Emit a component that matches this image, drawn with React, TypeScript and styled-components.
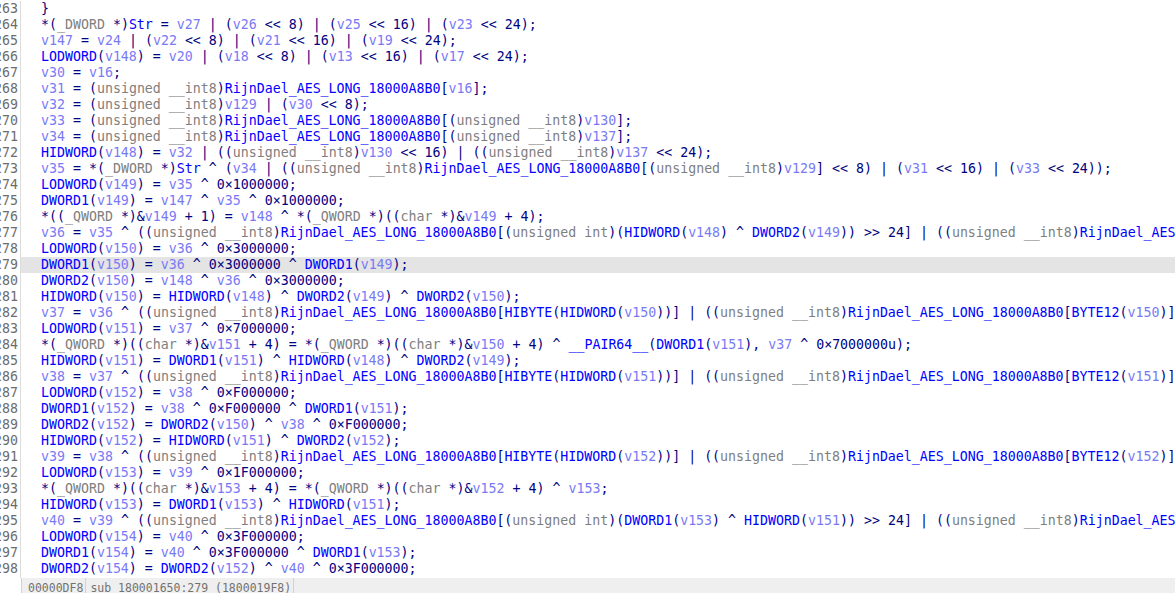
import React from 'react';
import styled, { createGlobalStyle } from 'styled-components';

const MONO = `"DejaVu Sans Mono", "Liberation Mono", monospace`;

const Global = createGlobalStyle`
  html, body { margin: 0; padding: 0; background: #ffffff; overflow: hidden; }
  #root { width: 1175px; height: 593px; overflow: hidden; }
`;

const Window = styled.div`
  display: flex;
  flex-direction: column;
  width: 1175px;
  height: 593px;
  overflow: hidden;
  background: #ffffff;
`;

const Editor = styled.div`
  display: flex;
  flex-direction: column;
  flex: none;
  height: 578px;
  padding-top: 1px;
  box-sizing: border-box;
  overflow: hidden;
`;

const Row = styled.div`
  display: grid;
  grid-template-columns: 21px 1fr;
  height: 16px;
  flex: none;
  line-height: 16px;
  font-family: ${MONO};
  font-size: 13.27px;
`;

const FillRow = styled(Row)`
  flex: 1;
  height: auto;
`;

const Gutter = styled.div`
  box-sizing: border-box;
  display: flex;
  justify-content: flex-end;
  overflow: hidden;
  padding-right: 2px;
  border-right: 1px solid #dcdcdc;
  color: #6c6c6c;
  white-space: pre;
  & > span { flex: none; }
`;

const CodeCell = styled.div<{ $active?: boolean }>`
  padding-left: 4px;
  overflow: hidden;
  white-space: pre;
  color: #000080;
  background: ${(p) => (p.$active ? '#e4e4e4' : 'transparent')};
`;

type Kind = 'var' | 'name' | 'type' | 'num' | 'punct' | 'space';

const COLORS: Record<Kind, string> = {
  var: '#7a7af4',
  name: '#0000ff',
  type: '#808080',
  num: '#000080',
  punct: '#000080',
  space: 'inherit',
};

const Tok = styled.span<{ $kind: Kind }>`
  color: ${(p) => COLORS[p.$kind]};
`;

const StatusBar = styled.div`
  display: flex;
  flex: none;
  height: 22px;
  background: #efefef;
  font-family: ${MONO};
  font-size: 11.5px;
  line-height: 16px;
  color: #727272;
`;

const StatusLead = styled.div`
  width: 21px;
  border-right: 1px solid #d2d2d2;
  background: #ffffff;
`;

const StatusCell = styled.div<{ $padLeft: number }>`
  padding: 2px 2px 0 ${(p) => p.$padLeft}px;
  border-right: 1px solid #d2d2d2;
  white-space: pre;
`;

const TYPES = new Set(['_DWORD', '_QWORD', 'char', 'unsigned', '__int8', 'int']);

const tokenize = (src: string): { t: string; k: Kind }[] => {
  const out: { t: string; k: Kind }[] = [];
  const re = /([A-Za-z_][A-Za-z0-9_]*)|(0x[0-9A-Fa-f]+u?|\d+u?)|(\s+)|([^\sA-Za-z0-9_]+)/g;
  let m: RegExpExecArray | null;
  while ((m = re.exec(src))) {
    if (m[1]) {
      const w = m[1];
      if (/^v\d+$/.test(w)) out.push({ t: w, k: 'var' });
      else if (TYPES.has(w)) out.push({ t: w, k: 'type' });
      else out.push({ t: w, k: 'name' });
    } else if (m[2]) {
      out.push({ t: m[2].replace(/^0x/, '0\u00d7'), k: 'num' });
    } else if (m[3]) {
      out.push({ t: m[3], k: 'space' });
    } else {
      out.push({ t: m[4], k: 'punct' });
    }
  }
  return out;
};

const SRC: string[] = [
  '}',
  '*(_DWORD *)Str = v27 | (v26 << 8) | (v25 << 16) | (v23 << 24);',
  'v147 = v24 | (v22 << 8) | (v21 << 16) | (v19 << 24);',
  'LODWORD(v148) = v20 | (v18 << 8) | (v13 << 16) | (v17 << 24);',
  'v30 = v16;',
  'v31 = (unsigned __int8)RijnDael_AES_LONG_18000A8B0[v16];',
  'v32 = (unsigned __int8)v129 | (v30 << 8);',
  'v33 = (unsigned __int8)RijnDael_AES_LONG_18000A8B0[(unsigned __int8)v130];',
  'v34 = (unsigned __int8)RijnDael_AES_LONG_18000A8B0[(unsigned __int8)v137];',
  'HIDWORD(v148) = v32 | ((unsigned __int8)v130 << 16) | ((unsigned __int8)v137 << 24);',
  'v35 = *(_DWORD *)Str ^ (v34 | ((unsigned __int8)RijnDael_AES_LONG_18000A8B0[(unsigned __int8)v129] << 8) | (v31 << 16) | (v33 << 24));',
  'LODWORD(v149) = v35 ^ 0x1000000;',
  'DWORD1(v149) = v147 ^ v35 ^ 0x1000000;',
  '*((_QWORD *)&v149 + 1) = v148 ^ *(_QWORD *)((char *)&v149 + 4);',
  'v36 = v35 ^ ((unsigned __int8)RijnDael_AES_LONG_18000A8B0[(unsigned int)(HIDWORD(v148) ^ DWORD2(v149)) >> 24] | ((unsigned __int8)RijnDael_AES_LONG_18000A8B0[(unsigned __int8)(HIDWORD(v148) ^ DWORD2(v149))] << 8));',
  'LODWORD(v150) = v36 ^ 0x3000000;',
  'DWORD1(v150) = v36 ^ 0x3000000 ^ DWORD1(v149);',
  'DWORD2(v150) = v148 ^ v36 ^ 0x3000000;',
  'HIDWORD(v150) = HIDWORD(v148) ^ DWORD2(v149) ^ DWORD2(v150);',
  'v37 = v36 ^ ((unsigned __int8)RijnDael_AES_LONG_18000A8B0[HIBYTE(HIDWORD(v150))] | ((unsigned __int8)RijnDael_AES_LONG_18000A8B0[BYTE12(v150)] << 8));',
  'LODWORD(v151) = v37 ^ 0x7000000;',
  '*(_QWORD *)((char *)&v151 + 4) = *(_QWORD *)((char *)&v150 + 4) ^ __PAIR64__(DWORD1(v151), v37 ^ 0x7000000u);',
  'HIDWORD(v151) = DWORD1(v151) ^ HIDWORD(v148) ^ DWORD2(v149);',
  'v38 = v37 ^ ((unsigned __int8)RijnDael_AES_LONG_18000A8B0[HIBYTE(HIDWORD(v151))] | ((unsigned __int8)RijnDael_AES_LONG_18000A8B0[BYTE12(v151)] << 8));',
  'LODWORD(v152) = v38 ^ 0xF000000;',
  'DWORD1(v152) = v38 ^ 0xF000000 ^ DWORD1(v151);',
  'DWORD2(v152) = DWORD2(v150) ^ v38 ^ 0xF000000;',
  'HIDWORD(v152) = HIDWORD(v151) ^ DWORD2(v152);',
  'v39 = v38 ^ ((unsigned __int8)RijnDael_AES_LONG_18000A8B0[HIBYTE(HIDWORD(v152))] | ((unsigned __int8)RijnDael_AES_LONG_18000A8B0[BYTE12(v152)] << 8));',
  'LODWORD(v153) = v39 ^ 0x1F000000;',
  '*(_QWORD *)((char *)&v153 + 4) = *(_QWORD *)((char *)&v152 + 4) ^ v153;',
  'HIDWORD(v153) = DWORD1(v153) ^ HIDWORD(v151);',
  'v40 = v39 ^ ((unsigned __int8)RijnDael_AES_LONG_18000A8B0[(unsigned int)(DWORD1(v153) ^ HIDWORD(v151)) >> 24] | ((unsigned __int8)RijnDael_AES_LONG_18000A8B0[(unsigned __int8)(DWORD1(v153) ^ HIDWORD(v151))] << 8));',
  'LODWORD(v154) = v40 ^ 0x3F000000;',
  'DWORD1(v154) = v40 ^ 0x3F000000 ^ DWORD1(v153);',
  'DWORD2(v154) = DWORD2(v152) ^ v40 ^ 0x3F000000;',
];

const FIRST = 263;
const ACTIVE = 279;

export default function App() {
  return (
    <Window>
      <Global />
      <Editor>
        {SRC.map((line, i) => {
          const n = FIRST + i;
          return (
            <Row key={n}>
              <Gutter>
                <span>{n}</span>
              </Gutter>
              <CodeCell $active={n === ACTIVE}>
                {'  '}
                {tokenize(line).map((tk, j) => (
                  <Tok key={j} $kind={tk.k}>
                    {tk.t}
                  </Tok>
                ))}
              </CodeCell>
            </Row>
          );
        })}
        <FillRow>
          <Gutter />
          <CodeCell />
        </FillRow>
      </Editor>
      <StatusBar>
        <StatusLead />
        <StatusCell $padLeft={6}>00000DF8</StatusCell>
        <StatusCell $padLeft={4}>sub_180001650:279 (1800019F8)</StatusCell>
      </StatusBar>
    </Window>
  );
}
